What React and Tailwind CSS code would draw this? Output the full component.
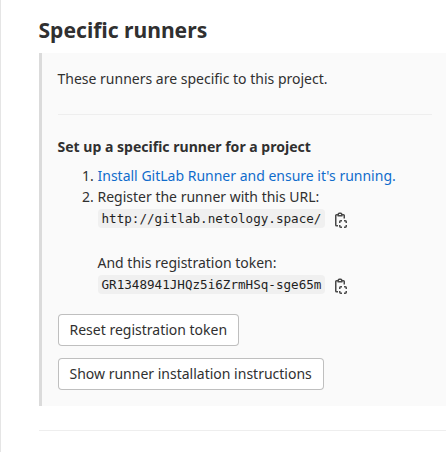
function CopyIcon() {
  return (
    <svg viewBox="0 0 12 16" className="ml-[10px] mt-[2px] h-4 w-3 shrink-0" fill="none" stroke="#484848" strokeWidth="1.5">
      <path d="M3 13.75H1.5a.75.75 0 0 1-.75-.75V3.5a.75.75 0 0 1 .75-.75H3M7 2.75h1.5a.75.75 0 0 1 .75.75v3" />
      <path d="M3.25 3.75v-1.5a1 1 0 0 1 1-1h1.5a1 1 0 0 1 1 1v1.5z" />
      <path d="M4.75 11v-1.25a1 1 0 0 1 1-1H7M9 8.75h1.25a1 1 0 0 1 1 1V11M11.25 13v1.25a1 1 0 0 1-1 1H9M7 15.25H5.75a1 1 0 0 1-1-1V13" />
    </svg>
  );
}

function CodeLine({ children }) {
  return (
    <div className="flex h-[22px] items-center">
      <code className="mb-[2px] h-[19px] rounded bg-[#f0f0f0] px-1 font-['DejaVu_Sans_Mono',monospace] text-[12.6px] leading-[19px] text-[#1f1f1f]">{children}</code>
      <CopyIcon />
    </div>
  );
}

function Button({ children }) {
  return (
    <button className="h-8 rounded bg-white px-3 text-sm leading-4 shadow-[inset_0_0_0_1px_#bfbfbf]">{children}</button>
  );
}

export default function App() {
  return (
    <main className="h-[452px] border-l border-[#e5e5e5] bg-white pl-[38px] pt-[18px] font-['Noto_Sans',sans-serif] text-sm leading-5 text-[#303030]">
      <h1 className="-ml-[0.5px] h-[35px] text-[21.1px] font-bold leading-6">Specific runners</h1>
      <section className="h-[353px] border-l-[3px] border-[#dbdbdb] bg-[#fafafa] pl-[15.5px] pt-4">
        <p>These runners are specific to this project.</p>
        <hr className="mr-[14px] mt-[25px] border-[#eeeeee]" />
        <h2 className="mt-[22px] text-[14.04px] font-bold">Set up a specific runner for a project</h2>
        <ol className="mt-[9px] list-decimal pl-10">
          <li className="h-[21px]"><a className="text-[#106ccc]">Install GitLab Runner and ensure it's running.</a></li>
          <li>
            <div className="h-[21px]">Register the runner with this URL:</div>
            <CodeLine>http://gitlab.netology.space/</CodeLine>
            <div className="mt-[23px] h-[21px]">And this registration token:</div>
            <CodeLine>GR1348941JHQz5i6ZrmHSq-sge65m</CodeLine>
          </li>
        </ol>
        <div className="mt-[18px] flex flex-col items-start gap-3">
          <Button>Reset registration token</Button>
          <Button>Show runner installation instructions</Button>
        </div>
      </section>
      <hr className="mt-6 border-[#eeeeee]" />
    </main>
  );
}
